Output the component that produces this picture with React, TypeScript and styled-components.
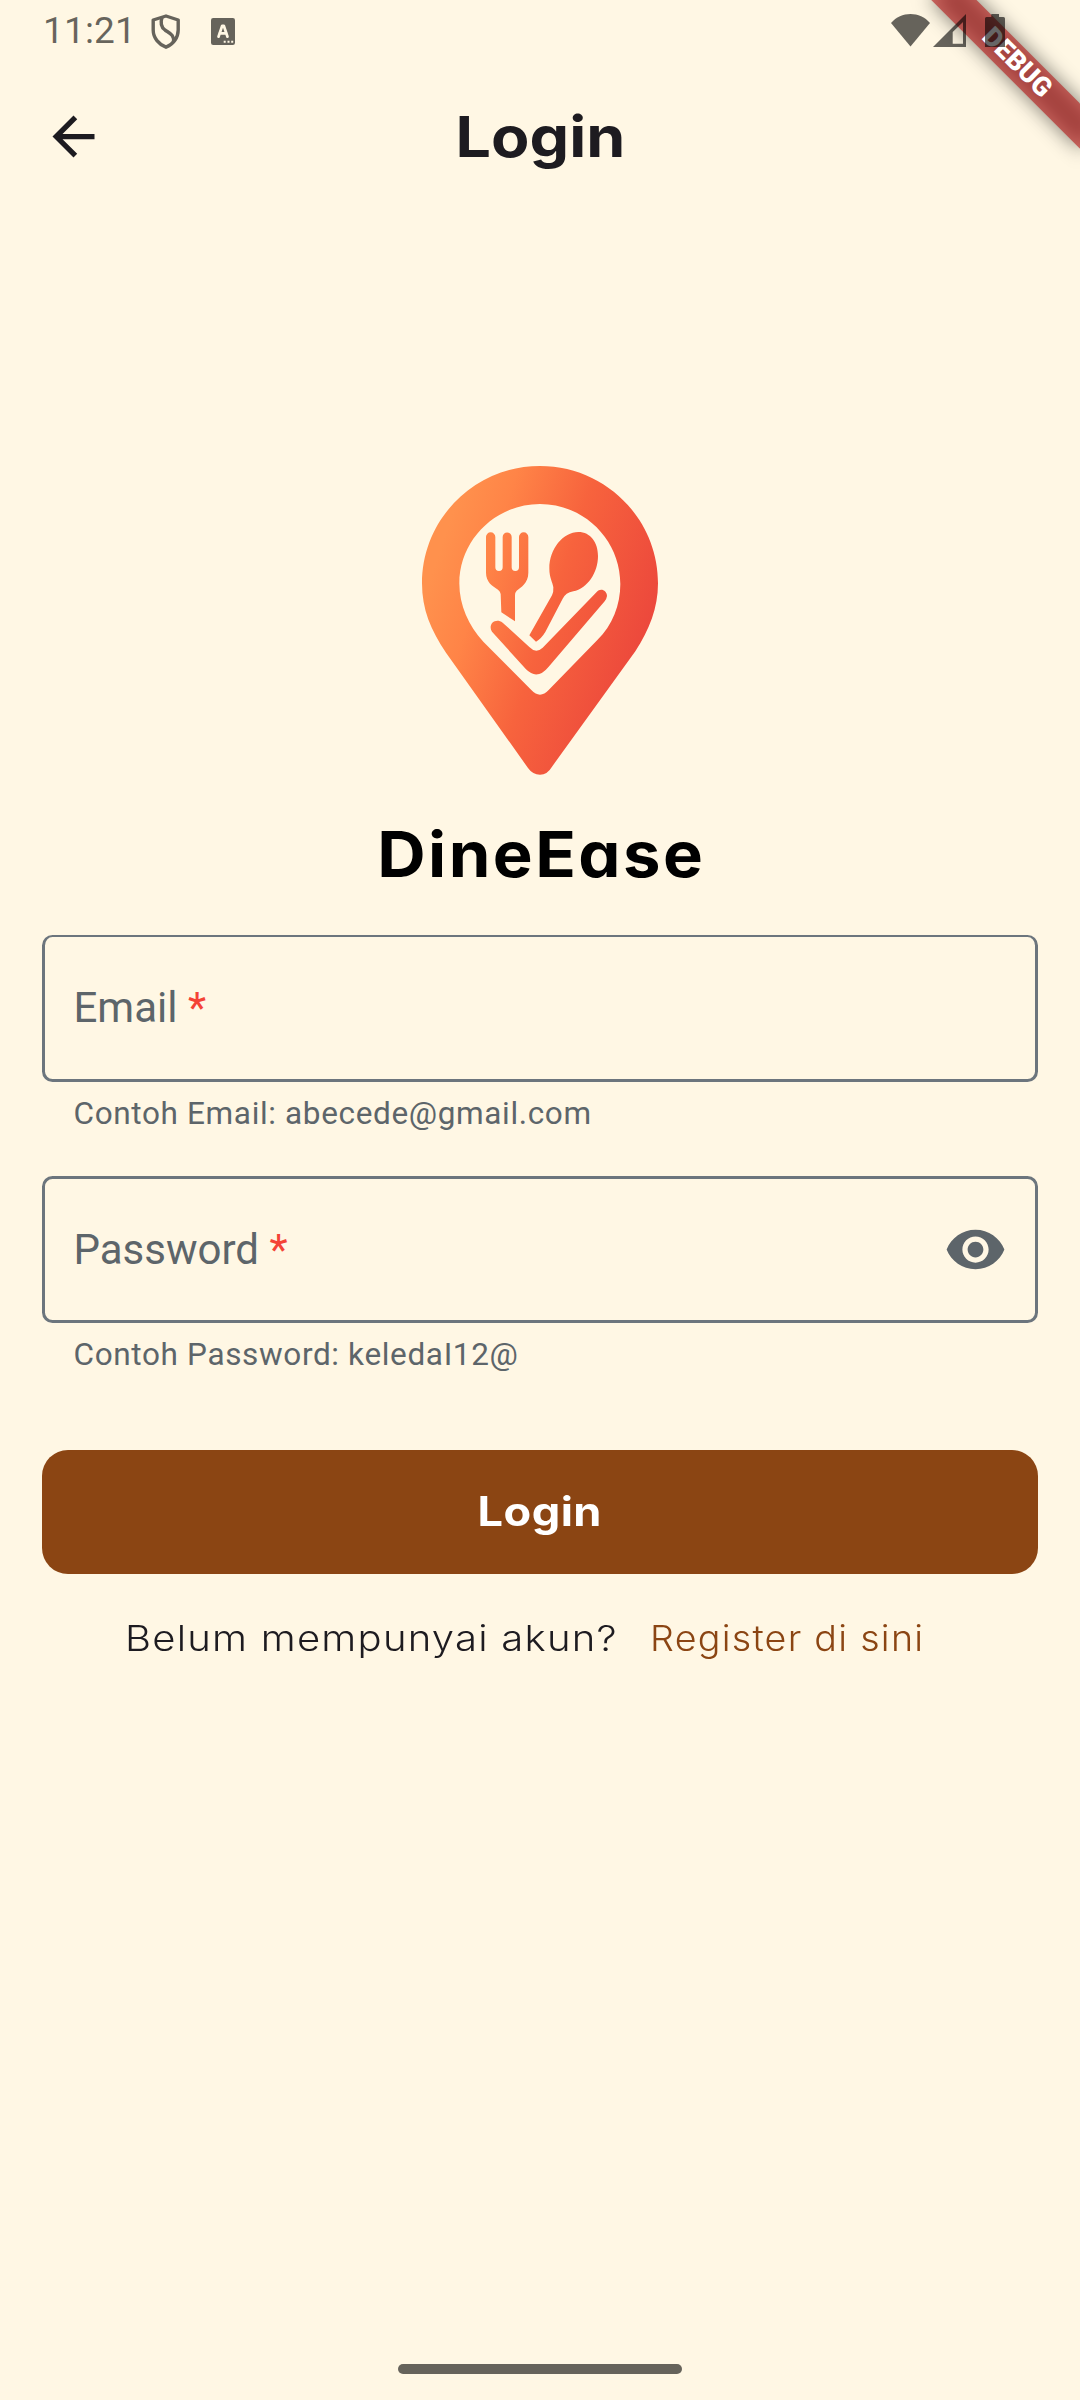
import React from "react";
import styled, { createGlobalStyle } from "styled-components";

const color = {
  page: "#fff7e4",
  ink: "#1d1b20",
  muted: "#5d656a",
  outline: "#6c757d",
  brown: "#8b4513",
  error: "#f44336",
  system: "rgba(0, 0, 0, 0.6)",
};

const GlobalStyle = createGlobalStyle`
  * { box-sizing: border-box; }
  body { margin: 0; background: ${color.page}; }
`;

const Screen = styled.div`
  position: relative;
  width: 1080px;
  height: 2400px;
  display: flex;
  flex-direction: column;
  overflow: hidden;
  background: ${color.page};
  color: ${color.ink};
  font-family: Roboto, sans-serif;
`;

const StatusBar = styled.header`
  position: relative;
  z-index: 2;
  height: 63px;
  flex: none;
  display: flex;
  justify-content: space-between;
  padding: 0 75px 0 43px;
`;

const StatusGroup = styled.div`
  display: flex;
  align-items: flex-start;
`;

const Clock = styled.span`
  width: 107px;
  padding-top: 9px;
  font-size: 37px;
  line-height: 44px;
  letter-spacing: 0.15px;
  color: ${color.system};
`;

const StatusIcon = styled.svg<{ $gap?: number; $top: number }>`
  display: block;
  flex: none;
  margin-left: ${(p) => p.$gap ?? 0}px;
  margin-top: ${(p) => p.$top}px;
`;

const Ribbon = styled.div`
  position: absolute;
  z-index: 1;
  left: 912.3px;
  top: 46.95px;
  width: 210px;
  height: 31.5px;
  transform: rotate(45deg);
  &::before {
    content: "";
    position: absolute;
    inset: 0;
    background: rgba(0, 0, 0, 0.5);
    filter: blur(10.3px);
  }
`;

const RibbonLabel = styled.div`
  position: relative;
  height: 100%;
  background: rgba(183, 28, 28, 0.627);
  color: #fff;
  font-size: 26.8px;
  font-weight: 900;
  line-height: 31.5px;
  text-align: center;
`;

const AppBar = styled.div`
  height: 147px;
  flex: none;
  display: grid;
  grid-template-columns: 105px 1fr 105px;
  align-items: center;
`;

const BackButton = styled.button`
  justify-self: end;
  display: block;
  padding: 0;
  border: 0;
  background: none;
  line-height: 0;
  color: ${color.ink};
`;

const Wide = styled.span<{ $by: number; $from?: string }>`
  display: inline-block;
  transform: scaleX(${(p) => p.$by});
  transform-origin: ${(p) => p.$from ?? "center"};
`;

const Title = styled.h1`
  margin: 0;
  text-align: center;
  font-family: Inter, sans-serif;
  font-size: 56.5px;
  font-weight: 700;
  line-height: 70px;
  letter-spacing: 0;
  padding-top: 1px;
`;

const Main = styled.main`
  flex: 1;
  display: flex;
  flex-direction: column;
  padding: 240px 42px 0;
`;

const Brand = styled.div`
  height: 485px;
  flex: none;
  display: flex;
  flex-direction: column;
  align-items: center;
`;

const LogoMark = styled.svg`
  display: block;
  flex: none;
`;

const Wordmark = styled.div`
  margin-top: 24px;
  padding-left: 3px;
  font-family: Inter, sans-serif;
  font-feature-settings: "cv11" 1;
  font-size: 62.6px;
  font-weight: 650;
  line-height: 80px;
  letter-spacing: 2.3px;
  color: #000;
  white-space: nowrap;
`;

const Field = styled.label<{ $top: number; $lift?: number }>`
  flex: none;
  height: 147px;
  display: flex;
  align-items: center;
  justify-content: space-between;
  padding: 0 28.5px ${(p) => p.$lift ?? 0}px 28.5px;
  border: 3px solid ${color.outline};
  border-top-width: ${(p) => p.$top}px;
  border-radius: 10.5px;
  color: ${color.muted};
  font-size: 42px;
`;

const Required = styled.span`
  color: ${color.error};
`;

const Helper = styled.p<{ $after: number }>`
  flex: none;
  height: 37px;
  margin: 13px 0 ${(p) => p.$after}px;
  padding-left: 31.5px;
  color: ${color.muted};
  font-size: 31.5px;
  line-height: 37px;
  letter-spacing: 0.65px;
`;

const SubmitButton = styled.button`
  flex: none;
  height: 124px;
  padding: 0 0 2px;
  border: 0;
  border-radius: 26px;
  background: ${color.brown};
  color: #fff;
  font-family: Inter, sans-serif;
  font-size: 40.5px;
  font-weight: 700;
  letter-spacing: 0.4px;
`;

const Prompt = styled.div`
  display: flex;
  padding: 42px 0 0 82.5px;
  font-family: Inter, sans-serif;
  font-size: 35.4px;
  font-weight: 300;
  line-height: 46px;
  white-space: nowrap;
`;

const Question = styled.span`
  width: 525px;
  letter-spacing: 1.1px;
`;

const RegisterLink = styled.a`
  color: ${color.brown};
  letter-spacing: 1.2px;
`;

const GestureBar = styled.div`
  flex: none;
  width: 284px;
  height: 10px;
  margin: 0 auto 26px;
  border-radius: 5px;
  background: ${color.system};
`;

const PinLogo = () => (
  <LogoMark width="280" height="340" viewBox="0 0 840 1020">
    <defs>
      <linearGradient id="flame" gradientUnits="userSpaceOnUse" x1="80" y1="420" x2="720" y2="630">
        <stop offset="0" stopColor="#ff914d" />
        <stop offset="0.22" stopColor="#ff8447" />
        <stop offset="0.55" stopColor="#f7633d" />
        <stop offset="1" stopColor="#ec483c" />
      </linearGradient>
    </defs>
    <g fill="url(#flame)">
      <path
        fillRule="evenodd"
        d="M420 48C616 48 774 206 774 400C774 474 748 540 706 604L456 950Q442 974 420 974Q398 974 384 954L138 608C92 540 66 478 66 400C66 206 224 48 420 48ZM420 162C287 162 178 270 178 400C178 466 206 528 250 575L394 720Q420 748 446 720L592 570C638 525 661 465 661 402C661 270 553 162 420 162Z"
      />
      <path d="M258 261a14 14 0 0 1 28 0V352a11 11 0 0 0 22 0V261a13.500 13.500 0 0 1 27 0V352a11 11 0 0 0 22 0V261a14 14 0 0 1 28 0V368C385 400 362 412 350 422Q345 427 345 436V514L304 487L302 432Q301 424 294 419C277 408 258 396 258 368Z" />
      <path d="M535 246C572 246 594 278 594 318C594 368 562 416 520 424C504 427 494 434 488 446L436 546Q424 566 408 575L388 556L456 436Q461 426 460 412C458 396 448 384 448 356C448 296 490 246 535 246Z" />
      <path d="M308 518L388 591Q408 612 428 593L590 426C602 412 621 422 621 438Q620 446 614 454L446 650Q412 692 378 658L276 545C262 522 287 502 308 518Z" />
    </g>
  </LogoMark>
);

const ShieldIcon = () => (
  <StatusIcon $top={13} width="32" height="37" viewBox="0 0 32 37" fill="none" stroke="#66635b" strokeWidth="3.4" strokeLinejoin="round">
    <path d="M16 3L28.200 7V17C28.200 25 23 31.500 16 34.200C9 31.500 3.200 25 3.200 17V7Z" />
    <path d="M12 4.500C10.500 9 11 14 15 17C20 20.500 24.500 22 23.500 29" />
  </StatusIcon>
);

const KeyboardIcon = () => (
  <StatusIcon $gap={29} $top={18} width="24" height="27" viewBox="0 0 24 27">
    <rect width="24" height="27" rx="2.200" fill="#66635b" />
    <path d="M7.500 18.700L11.200 7.800H12.800L16.500 18.700M8.500 15.300H15.500" fill="none" stroke={color.page} strokeWidth="2.700" strokeLinecap="round" strokeLinejoin="round" />
    <path d="M12.700 23.700h2M16.500 23.700h2M20.200 23.700h2" stroke={color.page} strokeWidth="2" />
  </StatusIcon>
);

const EyeIcon = () => (
  <svg width="63" height="63" viewBox="0 0 24 24" fill="currentColor">
    <path d="M12 4.5C7 4.500 2.730 7.610 1 12c1.730 4.390 6 7.500 11 7.500s9.270-3.110 11-7.500c-1.730-4.390-6-7.500-11-7.500zM12 17c-2.760 0-5-2.240-5-5s2.240-5 5-5 5 2.240 5 5-2.240 5-5 5zm0-8c-1.660 0-3 1.340-3 3s1.340 3 3 3 3-1.340 3-3-1.340-3-3-3z" />
  </svg>
);

export default function App() {
  return (
    <>
      <GlobalStyle />
      <Screen>
        <StatusBar>
          <StatusGroup>
            <Clock>11:21</Clock>
            <ShieldIcon />
            <KeyboardIcon />
          </StatusGroup>
          <StatusGroup>
            <StatusIcon $top={14} width="39" height="33" viewBox="0 0 39 33" fill={color.system}>
              <path d="M19.500 32.500L0 9C10-3 29-3 39 9Z" />
            </StatusIcon>
            <StatusIcon $gap={3} $top={14} width="33" height="33" viewBox="0 0 33 33" fill={color.system}>
              <path fillRule="evenodd" d="M33 0V33H0ZM30 8L19.700 18V29.700H30Z" />
            </StatusIcon>
            <StatusIcon $gap={19} $top={14} width="20" height="33" viewBox="0 0 20 33" fill={color.system}>
              <path d="M6.300 0H14V3H18.500Q20 3 20 4.500V33H0V4.500Q0 3 1.500 3H6.300Z" />
            </StatusIcon>
          </StatusGroup>
        </StatusBar>
        <Ribbon>
          <RibbonLabel>DEBUG</RibbonLabel>
        </Ribbon>
        <AppBar>
          <BackButton aria-label="Kembali">
            <svg width="63" height="63" viewBox="0 0 24 24" fill="currentColor">
              <path d="M20 11H7.830l5.590-5.590L12 4l-8 8 8 8 1.410-1.410L7.830 13H20v-2z" />
            </svg>
          </BackButton>
          <Title>
            <Wide $by={1.11}>Login</Wide>
          </Title>
        </AppBar>
        <Main>
          <Brand>
            <PinLogo />
            <Wordmark>
              <Wide $by={1.07}>DineEase</Wide>
            </Wordmark>
          </Brand>
          <Field $top={2} $lift={2}>
            <span>
              Email <Required>*</Required>
            </span>
          </Field>
          <Helper $after={44}>Contoh Email: abecede@gmail.com</Helper>
          <Field $top={3}>
            <span>
              Password <Required>*</Required>
            </span>
            <EyeIcon />
          </Field>
          <Helper $after={77}>Contoh Password: keledaI12@</Helper>
          <SubmitButton>
            <Wide $by={1.115}>Login</Wide>
          </SubmitButton>
          <Prompt>
            <Question>
              <Wide $by={1.131} $from="left">Belum mempunyai akun?</Wide>
            </Question>
            <RegisterLink>
              <Wide $by={1.063} $from="left">Register di sini</Wide>
            </RegisterLink>
          </Prompt>
        </Main>
        <GestureBar />
      </Screen>
    </>
  );
}
